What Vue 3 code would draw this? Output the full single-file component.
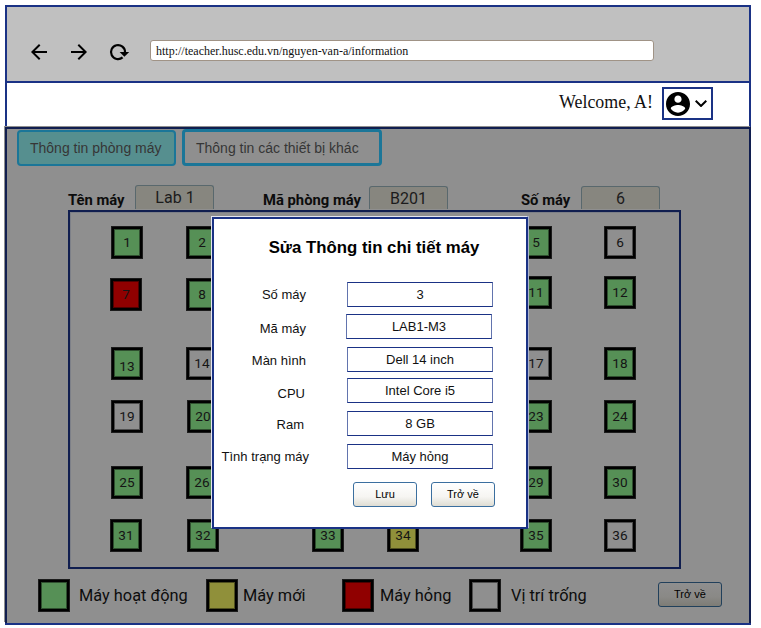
<script setup>
const fields = [
  { label: 'Tên máy', value: 'Lab 1' },
  { label: 'Mã phòng máy', value: 'B201' },
  { label: 'Số máy', value: '6' }
]

const empty = [6, 14, 17, 19, 36]
const broken = [7]
const fresh = [34]
const numbers = [1, 2, 5, 6, 7, 8, 11, 12, 13, 14, 17, 18, 19, 20, 23, 24, 25, 26, 29, 30, 31, 32, 33, 34, 35, 36]

function stateOf(n) {
  if (empty.includes(n)) return 'empty'
  if (broken.includes(n)) return 'broken'
  if (fresh.includes(n)) return 'fresh'
  return 'active'
}

const seats = numbers.map((n) => ({
  n,
  state: stateOf(n),
  row: Math.ceil(n / 6),
  col: ((n - 1) % 6) + 1
}))

const legend = [
  { state: 'active', text: 'Máy hoạt động' },
  { state: 'fresh', text: 'Máy mới' },
  { state: 'broken', text: 'Máy hỏng' },
  { state: 'empty', text: 'Vị trí trống' }
]

const details = [
  { label: 'Số máy', value: '3' },
  { label: 'Mã máy', value: 'LAB1-M3' },
  { label: 'Màn hình', value: 'Dell 14 inch' },
  { label: 'CPU', value: 'Intel Core i5' },
  { label: 'Ram', value: '8 GB' },
  { label: 'Tình trạng máy', value: 'Máy hỏng' }
]
</script>

<template>
  <div class="window">
    <div class="chrome">
      <svg class="nav" viewBox="0 0 24 24"><path d="M20 11H7.83l5.59-5.59L12 4l-8 8 8 8 1.41-1.41L7.83 13H20v-2z" /></svg>
      <svg class="nav" viewBox="0 0 24 24"><path d="M12 4l-1.41 1.41L16.17 11H4v2h12.17l-5.58 5.59L12 20l8-8z" /></svg>
      <svg class="nav reload" viewBox="0 0 24 24">
        <path class="arc" d="M15.6 17.4A7 7 0 1 1 18 12.3" />
        <path d="M12.6 12H22.2L17.4 16.8z" />
      </svg>
      <div class="url">http://teacher.husc.edu.vn/nguyen-van-a/information</div>
    </div>

    <header class="header">
      <span class="welcome">Welcome, A!</span>
      <div class="account">
        <svg class="avatar" viewBox="2 2 20 20"><path d="M12 2C6.48 2 2 6.48 2 12s4.48 10 10 10 10-4.48 10-10S17.52 2 12 2zm0 3c1.66 0 3 1.34 3 3s-1.34 3-3 3-3-1.34-3-3 1.34-3 3-3zm0 14.2c-2.5 0-4.71-1.28-6-3.22.03-1.99 4-3.08 6-3.08 1.99 0 5.97 1.09 6 3.08-1.29 1.94-3.5 3.22-6 3.22z" /></svg>
        <svg class="chevron" viewBox="6 8.59 12 7.41"><path d="M16.59 8.59L12 13.17 7.41 8.59 6 10l6 6 6-6z" /></svg>
      </div>
    </header>

    <main class="main">
      <nav class="tabs">
        <div class="tab current">Thông tin phòng máy</div>
        <div class="tab">Thông tin các thiết bị khác</div>
      </nav>

      <div class="fields">
        <div v-for="f in fields" :key="f.label" class="field">
          <span class="field-label">{{ f.label }}</span>
          <span class="field-value">{{ f.value }}</span>
        </div>
      </div>

      <section class="room">
        <div
          v-for="s in seats"
          :key="s.n"
          class="seat"
          :class="[s.state, 's' + s.n]"
          :style="{ gridRow: s.row, gridColumn: s.col }"
        >{{ s.n }}</div>
      </section>

      <footer class="legend">
        <div v-for="l in legend" :key="l.text" class="legend-item">
          <span class="seat" :class="l.state"></span>
          <span>{{ l.text }}</span>
        </div>
        <button class="btn dim">Trở về</button>
      </footer>
    </main>

    <div class="dialog">
      <h2 class="title">Sửa Thông tin chi tiết máy</h2>
      <div class="form">
        <div v-for="d in details" :key="d.label" class="row">
          <label class="name">{{ d.label }}</label>
          <div class="input">{{ d.value }}</div>
        </div>
      </div>
      <div class="actions">
        <button class="btn">Lưu</button>
        <button class="btn">Trở về</button>
      </div>
    </div>
  </div>
</template>

<style>
body {
  background: #fff;
}
</style>

<style scoped>
* {
  box-sizing: border-box;
}
.window {
  position: relative;
  width: 746px;
  height: 620px;
  margin: 5px 0 0 5px;
  border: 2px solid #1a3285;
  font-family: "Liberation Sans", Arial, sans-serif;
  background: #fff;
  white-space: nowrap;
}
.chrome {
  display: flex;
  align-items: flex-start;
  height: 76px;
  padding: 33px 0 0 20px;
  border-bottom: 2px solid #1a3285;
  background: #c0c0c0;
}
.nav {
  width: 24px;
  height: 24px;
  margin-right: 16px;
  flex: none;
}
.nav.reload {
  margin-right: 19px;
}
.arc {
  fill: none;
  stroke: #000;
  stroke-width: 2.2;
}
.url {
  width: 504px;
  height: 21px;
  padding-left: 5px;
  border: 1px solid #a09386;
  border-radius: 3px;
  background: #fff;
  color: #111;
  font: 12px/20px "Liberation Serif", serif;
}
.header {
  display: flex;
  justify-content: flex-end;
  height: 44px;
  padding: 4px 36px 0 0;
}
.welcome {
  margin-right: 9px;
  color: #111;
  font: 17.9px/31px "Liberation Serif", serif;
}
.account {
  display: flex;
  align-items: center;
  width: 51px;
  height: 33px;
  padding-left: 2px;
  border: 2px solid #1a3285;
}
.avatar {
  width: 24px;
  height: 24px;
}
.chevron {
  width: 12px;
  height: 7.4px;
  margin-left: 5px;
}
.main {
  height: 496px;
  margin: 0 -2px;
  border: 2px solid #101e4f;
  border-bottom: 0;
  background: #8f8f8f;
  box-shadow: -1px -1px 0 #8f8f8f;
  color: #0c0c0c;
}
.tabs {
  display: flex;
  gap: 6px;
  height: 37px;
  padding-left: 10px;
}
.tab {
  width: 200px;
  padding-left: 11px;
  border: 3px solid #1b7698;
  border-radius: 4px;
  color: #363636;
  font: 14px/32px "Liberation Sans", Arial, sans-serif;
}
.tab.current {
  width: 159px;
  margin-top: 1px;
  border-width: 2px;
  background: #568f8f;
}
.fields {
  display: flex;
  height: 44px;
  padding: 19px 0 0 61px;
}
.field {
  display: grid;
  grid-template-columns: 67px 79px;
  width: 195px;
}
.field:nth-child(2) {
  grid-template-columns: 106px 79px;
  width: 258px;
}
.field:nth-child(3) {
  grid-template-columns: 60px 79px;
}
.field-label {
  height: 24px;
  font: 700 14.8px/30px Roboto, sans-serif;
}
.field-value {
  height: 24px;
  padding-left: 1px;
  border: 1px solid #59686d;
  border-bottom: 0;
  border-radius: 3px 3px 0 0;
  background: #87867f;
  color: #1c1c1c;
  font: 16px/23px Roboto, sans-serif;
  text-align: center;
}
.field:nth-child(n + 2) .field-value {
  height: 23px;
  margin-top: 1px;
  padding-left: 0;
}
.room {
  display: grid;
  grid-template-columns: 75px 126px 75px 133px 84px 32px;
  grid-template-rows: 52px 69px 53px 66px 53px 33px;
  width: 613px;
  height: 359px;
  margin: 0 0 0 61px;
  padding: 14px 0 0 41px;
  border: 2px solid #101e4f;
  box-shadow: inset 1px 1px 0 #7d8088;
}
.seat {
  width: 32px;
  height: 33px;
  border: 1px solid #1c1c1c;
  box-shadow: inset 0 0 0 2px #000, inset 0 0 0 3px rgba(0, 0, 0, 0.45);
  color: #151515;
  font: 13.6px/30px Roboto, sans-serif;
  text-align: center;
}
.active {
  background: #569056;
}
.fresh {
  background: #90903a;
}
.broken {
  background: #900000;
}
.empty {
  background: #8f8f8f;
}
.s7,
.s31 {
  margin-left: -1px;
}
.s20,
.s32 {
  margin-left: 1px;
}
.s11,
.s12 {
  margin-top: -2px;
}
.s13 {
  padding-top: 3px;
}
.legend {
  display: flex;
  align-items: flex-start;
  margin-top: 10px;
  padding: 0 27px 0 31px;
}
.legend-item {
  display: flex;
  gap: 9px;
  width: 168px;
  font: 16.35px/33px Roboto, sans-serif;
}
.legend-item:nth-child(2) {
  gap: 5px;
  width: 136px;
}
.legend-item:nth-child(3) {
  gap: 6px;
  width: 127px;
}
.legend-item:nth-child(4) {
  gap: 10px;
}
.btn {
  width: 64px;
  height: 25px;
  padding: 0;
  border: 1px solid #3b6f9f;
  border-radius: 3px;
  background: linear-gradient(#fff, #f6f5f2 60%, #dfddd3);
  color: #000;
  font: 11px/23px "Liberation Sans", Arial, sans-serif;
}
.btn.dim {
  margin: 3px 0 0 auto;
  border-color: #21405b;
  background: linear-gradient(#8f8f8f, #8a8986 60%, #7d7c76);
}
.dialog {
  position: absolute;
  left: 205px;
  top: 210px;
  width: 316px;
  height: 312px;
  border: 2px solid #1a3285;
  background: #fff;
  box-shadow: -1px -1px 0 #e4e6ee, 1px -1px 0 #aab2cc;
  color: #111;
  font-size: 13px;
}
.title {
  margin: 19px 0 24px;
  padding-left: 8px;
  color: #000;
  font-size: 16.8px;
  font-weight: 700;
  line-height: 20px;
  text-align: center;
}
.form {
  display: grid;
  grid-template-rows: 32px 33px 31px 33px 33px 25px;
}
.row {
  display: grid;
  grid-template-columns: 92px 146px;
  gap: 41px;
  align-items: start;
}
.name {
  line-height: 26px;
  text-align: right;
}
.input {
  height: 25px;
  border: 1px solid #1a3285;
  border-left-color: #6274ae;
  border-right-color: #6274ae;
  line-height: 24px;
  text-align: center;
}
.row:nth-child(2) {
  gap: 40px;
}
.row:nth-child(2) .name {
  padding-top: 2px;
}
.row:nth-child(3) .name {
  padding-top: 1px;
}
.row:nth-child(4) .name {
  padding: 3px 1px 0 0;
}
.row:nth-child(5) .name {
  padding: 1px 2px 0 0;
}
.row:nth-child(6) {
  grid-template-columns: 95px 146px;
  gap: 38px;
}
.actions {
  display: flex;
  gap: 14px;
  padding: 13px 0 0 139px;
}
</style>
